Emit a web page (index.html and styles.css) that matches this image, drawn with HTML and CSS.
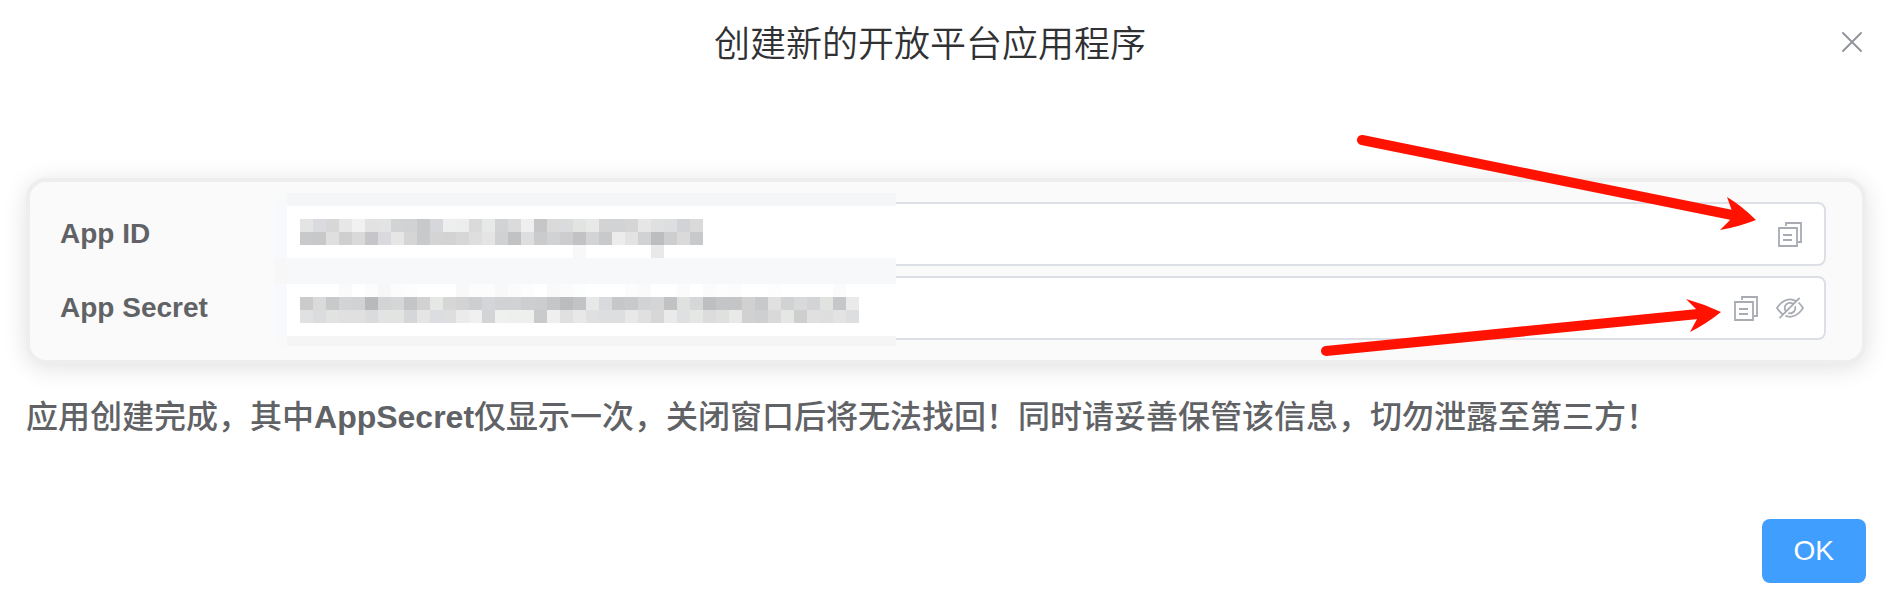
FILE: index.html
```html
<!DOCTYPE html>
<html lang="zh-CN">
<head>
<meta charset="utf-8">
<title>创建新的开放平台应用程序</title>
<link rel="stylesheet" href="styles.css">
</head>
<body>
<svg class="sprite" aria-hidden="true">
  <symbol id="icon-copy" viewBox="0 0 28 28">
    <path d="M3 8h18v18H3zM10 6V3h15v19h-3M7 15h9M7 20h9" fill="none" stroke="currentColor" stroke-width="1.8"/>
  </symbol>
  <symbol id="icon-hide" viewBox="0 0 1024 1024">
    <path fill="currentColor" d="M876.8 156.8c0-9.6-3.2-16-9.6-22.4-6.4-6.4-12.8-9.6-22.4-9.6-9.6 0-16 3.2-22.4 9.6L736 220.8c-64-32-137.6-51.2-224-60.8-160 16-288 73.6-377.6 176C44.8 438.4 0 496 0 512s48 73.6 134.4 176c22.4 25.6 44.8 48 73.6 67.2l-86.4 89.6c-6.4 6.4-9.6 12.8-9.6 22.4 0 9.6 3.2 16 9.6 22.4 6.4 6.4 12.8 9.6 22.4 9.6 9.6 0 16-3.2 22.4-9.6l704-710.4c3.2-6.4 6.4-12.8 6.4-22.4Zm-646.4 528c-76.8-70.4-128-128-153.6-172.8 28.8-48 80-105.6 153.6-172.8C304 272 400 230.4 512 224c64 3.2 124.8 19.2 176 44.8l-54.4 54.4C598.4 300.8 560 288 512 288c-64 0-115.2 22.4-160 64s-64 96-64 160c0 48 12.8 89.6 35.2 124.8L256 707.2c-9.6-6.4-19.2-16-25.6-22.4Zm140.8-96c-12.8-22.4-19.2-48-19.2-76.8 0-44.8 16-83.2 48-112 32-28.8 67.2-48 112-48 28.8 0 54.4 6.4 73.6 19.2L371.2 588.8ZM889.6 336c-12.8-16-28.8-28.8-41.6-41.6l-48 48c73.6 67.2 124.8 124.8 150.4 169.6-28.8 48-80 105.6-153.6 172.8-73.6 67.2-172.8 108.8-284.8 115.2-51.2-3.2-99.2-12.8-140.8-28.8l-48 48c57.6 22.4 118.4 38.4 188.8 44.8 160-16 288-73.6 377.6-176C979.2 585.6 1024 528 1024 512s-48-73.6-134.4-176Z"/>
    <path fill="currentColor" d="M512 672c-12.8 0-25.6-3.2-38.4-6.4l-51.2 51.2c28.8 12.8 57.6 19.2 89.6 19.2 64 0 115.2-22.4 160-64 41.6-41.6 64-96 64-160 0-32-6.4-64-19.2-89.6l-51.2 51.2c3.2 12.8 6.4 25.6 6.4 38.4 0 44.8-16 83.2-48 112-32 28.8-67.2 48-112 48Z"/>
  </symbol>
</svg>

<main class="dialog" role="dialog" aria-labelledby="dialog-title">
  <header class="dialog-header">
    <h1 class="dialog-title" id="dialog-title">创建新的开放平台应用程序</h1>
    <button class="icon-button" type="button" aria-label="关闭">
      <svg class="icon-close" viewBox="0 0 20 20"><path d="M1 1l18 18M19 1L1 19" fill="none" stroke="currentColor" stroke-width="1.9" stroke-linecap="round"/></svg>
    </button>
  </header>

  <section class="credentials">
    <div class="card">
      <div class="row">
        <label class="label" for="app-id">App ID</label>
        <div class="field">
          <input class="field-input" id="app-id" type="text" readonly>
          <button class="icon-button" type="button" aria-label="复制 App ID"><svg class="icon"><use href="#icon-copy"/></svg></button>
        </div>
      </div>
      <div class="row">
        <label class="label" for="app-secret">App Secret</label>
        <div class="field">
          <input class="field-input" id="app-secret" type="password" readonly>
          <button class="icon-button" type="button" aria-label="复制 App Secret"><svg class="icon"><use href="#icon-copy"/></svg></button>
          <button class="icon-button" type="button" aria-label="隐藏 App Secret"><svg class="icon"><use href="#icon-hide"/></svg></button>
        </div>
      </div>
    </div>
    <svg class="mosaic" id="mosaic" viewBox="0 0 622 153" shape-rendering="crispEdges" aria-hidden="true"></svg>
    <svg class="arrows" viewBox="1316 130 450 230" aria-hidden="true">
      <path class="arrow-line" d="M1362 140L1732 215M1326 351L1698 314"/>
      <path class="arrow-head" d="M1756 220Q1742 206 1727 197L1732 211L1730 220L1720 230Q1738 227 1756 220ZM1721 312Q1704 304 1686 299L1696 309L1697 319L1690 332Q1706 324 1721 312Z"/>
    </svg>
  </section>

  <p class="notice">应用创建完成，其中<strong class="term">AppSecret</strong>仅显示一次，关闭窗口后将无法找回！同时请妥善保管该信息，切勿泄露至第三方！</p>

  <footer class="dialog-footer">
    <button class="ok-button" type="button">OK</button>
  </footer>
</main>
<script src="mosaic.js"></script>
</body>
</html>
```
FILE: styles.css
```css
* {
  box-sizing: border-box;
}

body {
  margin: 0;
  background: #fff;
  color: #606266;
  font-family: "Liberation Sans", "Noto Sans CJK SC", sans-serif;
}

button {
  border: 0;
  font: inherit;
  cursor: pointer;
}

.sprite {
  position: absolute;
  width: 0;
  height: 0;
}

.dialog {
  padding: 16px 26px 18px;
}

.dialog-header {
  display: flex;
  align-items: flex-start;
  padding-right: 4px;
}

.dialog-header .icon-button {
  padding: 16px 0;
}

.dialog-title {
  flex: 1;
  margin: 0;
  padding-right: 8px;
  color: #303133;
  font-family: "Noto Sans CJK SC", sans-serif;
  font-size: 36px;
  font-weight: 350;
  line-height: 50px;
  text-align: center;
}

.icon-button {
  display: flex;
  padding: 0;
  background: none;
  color: #a8abb2;
}

.icon-close {
  width: 20px;
  height: 20px;
  color: #909399;
}

.icon {
  width: 28px;
  height: 28px;
}

.credentials {
  position: relative;
  margin-top: 110px;
}

.card {
  display: grid;
  gap: 10px;
  padding: 20px 36px 20px 30px;
  border: 4px solid #eee;
  border-radius: 20px;
  background: #fafafa;
  box-shadow: 0 4px 24px rgba(0, 0, 0, 0.12);
}

.row {
  display: flex;
  align-items: center;
}

.label {
  width: 226px;
  font-size: 28px;
  font-weight: 700;
  line-height: 32px;
}

.field {
  display: flex;
  flex: 1;
  align-items: center;
  gap: 16px;
  height: 64px;
  padding: 0 20px;
  border: 2px solid #dcdfe6;
  border-radius: 8px;
  background: #fff;
}

.field-input {
  flex: 1;
  min-width: 0;
  padding: 0;
  border: 0;
  outline: 0;
  background: none;
  color: inherit;
  font: inherit;
  font-size: 28px;
}

.mosaic {
  position: absolute;
  top: 15px;
  left: 248px;
  width: 622px;
  height: 153px;
}

.arrows {
  position: absolute;
  top: -48px;
  right: 100px;
  width: 450px;
  height: 230px;
  pointer-events: none;
}

.arrow-line {
  fill: none;
  stroke: #ff1200;
  stroke-width: 10;
  stroke-linecap: round;
}

.arrow-head {
  fill: #ff1200;
}

.notice {
  margin: 29px 0 0;
  font-size: 32px;
  font-weight: 500;
  line-height: 48px;
}

.term {
  font-weight: 700;
}

.dialog-footer {
  display: flex;
  justify-content: flex-end;
  margin-top: 78px;
}

.ok-button {
  height: 64px;
  padding: 0 32px;
  border-radius: 8px;
  background: #409eff;
  color: #fff;
  font-size: 28px;
}
```
FILE: mosaic.js
```js
// Pixelated cover over the secret values: a grid of 13px cells.
const CELL = 13;
const svg = document.getElementById("mosaic");

function block(x, y, width, height, fill) {
  const rect = document.createElementNS("http://www.w3.org/2000/svg", "rect");
  Object.entries({ x, y, width, height, fill }).forEach(([k, v]) => rect.setAttribute(k, v));
  svg.appendChild(rect);
}

block(0, 0, 13, 13, "#f8faf9");
block(13, 0, 609, 13, "#f5f6f8");
block(0, 13, 13, 52, "#f7f9fc");
block(13, 13, 609, 52, "#fff");
block(0, 65, 13, 26, "#f7f7f7");
block(13, 65, 609, 26, "#f7f8fa");
block(0, 91, 13, 52, "#f7f9fc");
block(13, 91, 609, 52, "#fff");
block(0, 143, 13, 10, "#f9f9f9");
block(13, 143, 609, 10, "#f5f5f5");

const rows = [
  [26, "e4e4e4 dadbde d7d7d7 e7e7e7 f1f1f1 e2e2e2 e1e4e2 d1d3d5 d1d2d4 c8c9cb d6d7da eeeeee ebeeec dadada e6e9e7 d1d3d5 dbdbdb efefef c6c6c8 dadada dadbdd e2e4e2 e6e9e7 d3d3d3 d1d3d5 d5d5d5 e6e6e6 dee1df dcdee0 d1d3d6 dadada"],
  [39, "c8c9cb c8c8ca dfdfdf cfcfcf d9d9d9 c6c6c8 d8dadd e6e6e6 d5d5d5 c8c9cb d4d4d4 d3d3d3 d7d7d7 dedede e4e4e4 d0d1d3 c1c2c4 dedede cacbcd d1d2d4 cdcdd0 c2c2c4 d3d4d6 c8c9cb ececec e3e3e3 d1d2d4 bcbdbf cdced0 dadada c8c9cb"],
  [104, "cbcbcb dadada c8c9cb d3d4d6 d1d2d4 b8b9bb d4d4d4 d5d6d8 c4c5c7 d2d2d2 e6e8e6 d6d6d6 d3d3d3 cdced0 d4d5d8 d1d2d4 d1d2d4 cdced0 cccdcf c5c6c8 bbbcbe c2c3c5 e6e9e7 d9dadd c6c7c9 c8c9cb d2d3d5 d5d5d5 c1c2c4 dfe1df d6d7d9 bebfc1 c4c5c7 c4c5c7 d1d1d1 c8c9cb e0e0e0 d1d2d4 d9d9d9 d3d4d6 e1e3e1 c6c7c9 eaeaea"],
  [117, "e0e1e3 dbdcde e1e3e1 e0e0e0 e0e0e0 dadbdd e3e3e3 e2e4e2 d5d6d8 e5e5e5 dcdde0 dedede ebebeb f0f0f0 d3d4d6 eff1ef eef0ee eef0ee c9cacc efefef e0e0e0 e8e8e8 e0e0e0 dddee0 dddee0 e8e8e8 e0e0e0 d7d7d7 eaeaea dfe0e2 e5e7e5 dcdcdc dfe1df e9e9e9 d1d1d1 cecfd1 d9d9d9 e5e7e5 cecece e0e0e0 dedede e3e3e3 dddee0"]
];
rows.forEach(([y, colours]) => {
  colours.split(" ").forEach((c, i) => block(26 + i * CELL, y, CELL, CELL, "#" + c));
});

const faint = [
  [21, 52, "f8f8f8"], [27, 52, "e9e9e9"],
  [3, 91, "fafafa"], [5, 91, "fcfcfc"], [6, 91, "f7f7f7"], [7, 91, "fcfcfc"], [8, 91, "fdfdfd"],
  [12, 91, "f8f8f8"], [13, 91, "fcfcfc"], [14, 91, "fcfcfc"], [15, 91, "f8f8f8"], [16, 91, "fbfbfb"],
  [17, 91, "fdfdfd"], [19, 91, "f9f9f9"], [20, 91, "fbfbfb"], [21, 91, "fcfefd"], [25, 91, "fcfcfc"],
  [26, 91, "fafafa"], [29, 91, "fbfbfb"], [31, 91, "fbfbfb"], [32, 91, "fdfdfd"], [33, 91, "fcfcfc"],
  [36, 91, "fdfdfd"], [41, 91, "fbfbfb"]
];
faint.forEach(([i, y, c]) => block(26 + i * CELL, y, CELL, CELL, "#" + c));
```
